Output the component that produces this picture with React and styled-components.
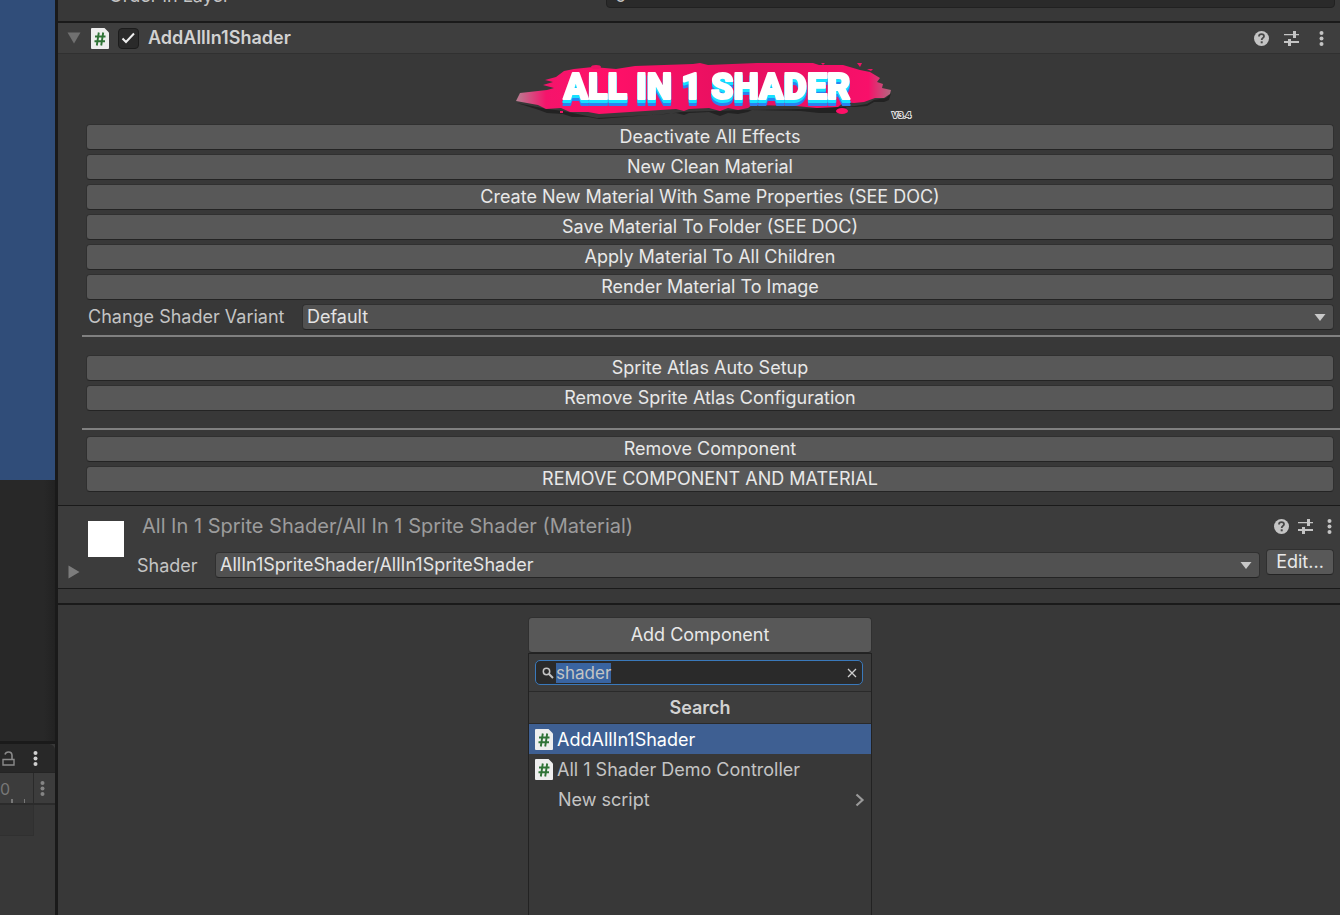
import React, { useEffect, useRef, useState } from "react";
import styled, { createGlobalStyle } from "styled-components";

const materialActions = [
  "Deactivate All Effects",
  "New Clean Material",
  "Create New Material With Same Properties (SEE DOC)",
  "Save Material To Folder (SEE DOC)",
  "Apply Material To All Children",
  "Render Material To Image",
];
const atlasActions = ["Sprite Atlas Auto Setup", "Remove Sprite Atlas Configuration"];
const removeActions = ["Remove Component", "REMOVE COMPONENT AND MATERIAL"];

export default function App() {
  return (
    <>
      <GlobalStyle />
      <Editor>
        <SidePanel />
        <Inspector>
          <PreviousRow>
            <PreviousLabel htmlFor="order">Order in Layer</PreviousLabel>
            <NumberField id="order" defaultValue="0" />
          </PreviousRow>
          <ShaderComponent />
          <MaterialSection />
          <AddComponent />
        </Inspector>
      </Editor>
    </>
  );
}

function SidePanel() {
  return (
    <Side>
      <Hierarchy>
        <Selection />
      </Hierarchy>
      <Timeline>
        <TimelineTabs>
          <IconButton aria-label="Lock">
            <LockIcon />
          </IconButton>
          <IconButton aria-label="Timeline menu">
            <DotsIcon color="#d0d0d0" />
          </IconButton>
        </TimelineTabs>
        <TimelineBar>
          <Ruler>
            <span>00</span>
            <svg width="34" height="4" viewBox="0 0 34 4">
              <path d="M11 0h2v4h-2zM24 0h1v4h-1z" fill="#777" />
            </svg>
          </Ruler>
          <IconButton aria-label="Track menu">
            <DotsIcon color="#858585" />
          </IconButton>
        </TimelineBar>
        <Track />
      </Timeline>
    </Side>
  );
}

function ShaderComponent() {
  const [enabled, setEnabled] = useState(true);
  return (
    <section>
      <ComponentHeader>
        <Foldout aria-label="Collapse">
          <svg width="14" height="12" viewBox="0 0 14 12">
            <path d="M0.500 0.500h13L7 11.500z" fill="#707070" />
          </svg>
        </Foldout>
        <ScriptIcon />
        <CheckWrap>
          <Checkbox
            id="enabled"
            type="checkbox"
            checked={enabled}
            onChange={(e) => setEnabled(e.target.checked)}
          />
          {enabled && (
            <svg width="21" height="21" viewBox="0 0 21 21" fill="none">
              <path d="M4.500 10.500l3.500 3.500 8-8.500" stroke="#eee" strokeWidth="2" />
            </svg>
          )}
        </CheckWrap>
        <ComponentTitle htmlFor="enabled">AddAllIn1Shader</ComponentTitle>
        <HeaderIcons $gap={15}>
          <HeaderButtons />
        </HeaderIcons>
      </ComponentHeader>
      <Banner>
        <ShaderLogo />
      </Banner>
      <ActionList>
        {materialActions.map((label) => (
          <Button key={label}>{label}</Button>
        ))}
        <VariantRow>
          <Label htmlFor="variant">Change Shader Variant</Label>
          <Dropdown id="variant" value="Default" />
        </VariantRow>
      </ActionList>
      <Rule $space={18} />
      <ActionList>
        {atlasActions.map((label) => (
          <Button key={label}>{label}</Button>
        ))}
      </ActionList>
      <Spacer />
      <Rule $space={6} />
      <ActionList>
        {removeActions.map((label) => (
          <Button key={label}>{label}</Button>
        ))}
      </ActionList>
    </section>
  );
}

function MaterialSection() {
  return (
    <Material>
      <Foldout aria-label="Expand material">
        <svg width="12" height="14" viewBox="0 0 12 14">
          <path d="M0.500 0.500v13L11.500 7z" fill="#7c7c7c" />
        </svg>
      </Foldout>
      <Preview />
      <MaterialBody>
        <MaterialTop>
          <MaterialTitle>All In 1 Sprite Shader/All In 1 Sprite Shader (Material)</MaterialTitle>
          <HeaderIcons $gap={9}>
            <HeaderButtons />
          </HeaderIcons>
        </MaterialTop>
        <ShaderRow>
          <Label htmlFor="shader">Shader</Label>
          <Dropdown id="shader" value="AllIn1SpriteShader/AllIn1SpriteShader" />
          <EditButton>Edit...</EditButton>
        </ShaderRow>
      </MaterialBody>
    </Material>
  );
}

function AddComponent() {
  const input = useRef(null);
  const [query, setQuery] = useState("shader");

  useEffect(() => {
    input.current.focus();
    input.current.select();
  }, []);

  return (
    <AddArea>
      <AddButton>Add Component</AddButton>
      <Popup>
        <SearchArea>
          <SearchBox>
            <svg width="12" height="12" viewBox="0 0 12 12" fill="none" stroke="#c4c4c4">
              <circle cx="4.500" cy="4.500" r="3.200" strokeWidth="1.500" />
              <path d="M7 7l4 4" strokeWidth="2" />
            </svg>
            <SearchInput
              ref={input}
              aria-label="Search components"
              value={query}
              onChange={(e) => setQuery(e.target.value)}
            />
            <IconButton aria-label="Clear" onClick={() => setQuery("")}>
              <svg width="10" height="10" viewBox="0 0 10 10" stroke="#d0d0d0">
                <path d="M1 1l8 8M9 1l-8 8" strokeWidth="1.300" />
              </svg>
            </IconButton>
          </SearchBox>
        </SearchArea>
        <PopupTitle>Search</PopupTitle>
        <Result $active>
          <ScriptIcon />
          AddAllIn1Shader
        </Result>
        <Result>
          <ScriptIcon />
          All 1 Shader Demo Controller
        </Result>
        <Result $plain>
          New script
          <svg width="10" height="14" viewBox="0 0 10 14" fill="none">
            <path d="M1.500 1.500L7.500 7l-6 5.500" stroke="#9a9a9a" strokeWidth="2.200" />
          </svg>
        </Result>
      </Popup>
    </AddArea>
  );
}

function Dropdown({ id, value }) {
  return (
    <SelectWrap>
      <Select id={id} defaultValue={value}>
        <option>{value}</option>
      </Select>
      <svg width="12" height="7" viewBox="0 0 12 7">
        <path d="M0.500 0h11L6 7z" fill="#c8c8c8" />
      </svg>
    </SelectWrap>
  );
}

function HeaderButtons() {
  return (
    <>
      <IconButton aria-label="Help">
        <svg width="15" height="15" viewBox="0 0 15 15" fill="none">
          <circle cx="7.500" cy="7.500" r="7.500" fill="#c4c4c4" />
          <path
            d="M5 5.500C5 3.900 6 3.200 7.500 3.200S10 4 10 5.300c0 1.600-2.300 1.700-2.300 3.700"
            stroke="#484848"
            strokeWidth="1.800"
          />
          <path d="M6.700 10.300h2v2h-2z" fill="#484848" />
        </svg>
      </IconButton>
      <IconButton aria-label="Presets">
        <svg width="15" height="15" viewBox="0 0 15 15" fill="#c4c4c4">
          <path d="M0 3h9v1.200H0zM9 0h3v7H9zM12 3h3v1.200h-3zM0 10h4v2H0zM4 8h3v7H4zM7 10h8v2H7z" />
        </svg>
      </IconButton>
      <IconButton aria-label="More">
        <DotsIcon color="#c4c4c4" />
      </IconButton>
    </>
  );
}

function DotsIcon({ color }) {
  return (
    <svg width="5" height="15" viewBox="0 0 5 15" fill={color}>
      <circle cx="2.500" cy="2" r="2" />
      <circle cx="2.500" cy="7.500" r="2" />
      <circle cx="2.500" cy="13" r="2" />
    </svg>
  );
}

function LockIcon() {
  return (
    <svg width="13" height="15" viewBox="0 0 13 15" fill="none" stroke="#8a8a8a">
      <path d="M1 8.500h11v5.500H1z" strokeWidth="1.400" />
      <path d="M3 3.500C3.500 1.700 4.700 1 6.500 1 8.800 1 10 2.300 10 4.500V8" strokeWidth="1.600" />
    </svg>
  );
}

function ScriptIcon() {
  return (
    <svg width="18" height="21" viewBox="0 0 18 21" fill="none">
      <path d="M1 0h12.500L18 4.500V20a1 1 0 0 1-1 1H1a1 1 0 0 1-1-1V1a1 1 0 0 1 1-1z" fill="#eee" />
      <path d="M7.800 4.500L5.800 17.500M12.200 4.500l-2 13M4 8.500h10.500M3.500 13.200H14" stroke="#2f7336" strokeWidth="1.900" />
    </svg>
  );
}

function ShaderLogo() {
  return (
    <svg width="410" height="66" viewBox="0 0 410 66" role="img" aria-label="All In 1 Shader v3.4">
      <defs>
        <linearGradient id="splash">
          <stop offset="0" stopColor="#b98093" />
          <stop offset="0.080" stopColor="#f5146b" />
          <stop offset="0.250" stopColor="#ff1068" />
          <stop offset="0.600" stopColor="#e5105f" />
          <stop offset="0.940" stopColor="#f8106a" />
          <stop offset="1" stopColor="#b06a80" />
        </linearGradient>
      </defs>
      <path
        d="M4 38L34 44 50 46 84 53 154 49 168 47 230 45 288 44 342 41 354 39 361 35 373 33 378 28 376 35 371 37 361 37 354 41 342 42 334 42 330 45 324 48 306 48 288 46 239 45 235 47 225 49 215 48 207 51 196 47 176 48 171 50 163 48 86 54 75 52 59 52 50 49 34 48 26 45z"
        fill="#222"
        transform="translate(1 3)"
      />
      <path
        d="M3 37L7 29 34 26 41 24 30 21 40 18 32 16 43 13 51 7 61 5 80 3 103 5 122 2 180 0 187-1 195 1 244-1 300-1 306 1 330 1 347 6 357 8 367 14 364 18 370 20 369 24 378 26 377 30 371 34 362 34 351 38 341 39 331 38 325 43 304 44 283 42 239 41 235 44 225 46 215 44 207 47 196 44 176 45 171 47 163 45 86 50 75 48 57 48 48 44 33 45 25 41z"
        fill="url(#splash)"
        transform="translate(1 2)"
      />
      <ellipse cx="84" cy="5" rx="5" ry="2" fill="#ed1264" />
      <ellipse cx="330" cy="49" rx="6" ry="3" fill="#ff1068" />
      <path d="M309 1h4l-2 2zM345 1h5l-2 4zM355 7h6l-2 2zM48 49h3v2h-3z" fill="#ef1465" />
      <LogoText x="195" y="37">
        ALL IN 1 SHADER
      </LogoText>
      <VersionText x="380" y="56">
        V3.4
      </VersionText>
    </svg>
  );
}

const GlobalStyle = createGlobalStyle`
  * {
    box-sizing: border-box;
  }
  body {
    margin: 0;
    background: #383838;
    color: #c4c4c4;
    font-family: Inter, "Liberation Sans", sans-serif;
    font-size: 18px;
    line-height: 24px;
  }
  button, input, select {
    font: inherit;
    color: inherit;
  }
  svg {
    display: block;
    flex-shrink: 0;
  }
`;

const Editor = styled.div`
  display: flex;
  height: 100vh;
  overflow: hidden;
`;

const Side = styled.aside`
  display: flex;
  flex-direction: column;
  width: 58px;
  flex-shrink: 0;
  border-right: 3px solid #1a1a1a;
`;
const Hierarchy = styled.div`
  flex: 1;
  background: linear-gradient(to right, #282828 80%, #222);
`;
const Selection = styled.div`
  height: 480px;
  background: #304d79;
`;
const Timeline = styled.div`
  height: 174px;
  border-top: 3px solid #1a1a1a;
  background: #383838;
`;
const TimelineTabs = styled.div`
  display: flex;
  align-items: center;
  gap: 18px;
  height: 28px;
  padding-left: 2px;
  background: #282828;
  border-top-right-radius: 6px;
`;
const TimelineBar = styled.div`
  display: flex;
  align-items: center;
  gap: 6px;
  height: 33px;
  background: #3c3c3c;
  border-top: 1px solid #242424;
  border-bottom: 2px solid #2b2b2b;
`;
const Ruler = styled.div`
  display: flex;
  flex-direction: column;
  align-items: flex-start;
  justify-content: flex-end;
  width: 34px;
  height: 100%;
  border-right: 1px solid #2a2a2a;
  color: #777;
  font-size: 16px;
  line-height: 20px;
  overflow: hidden;
  span {
    margin-left: -10px;
  }
`;
const Track = styled.div`
  width: 34px;
  height: 31px;
  background: #343434;
  border-right: 1px solid #303030;
  border-bottom: 1px solid #303030;
`;

const Inspector = styled.main`
  display: flex;
  flex-direction: column;
  flex: 1;
  min-width: 0;
`;
const PreviousRow = styled.div`
  display: flex;
  height: 23px;
  flex-shrink: 0;
  padding: 0 5px 0 51px;
  border-bottom: 2px solid #1a1a1a;
  overflow: hidden;
`;
const PreviousLabel = styled.label`
  width: 497px;
  margin-top: -16px;
`;
const NumberField = styled.input`
  flex: 1;
  height: 26px;
  margin-top: -18px;
  padding: 0 8px;
  background: #2a2a2a;
  border: 1px solid #212121;
  border-radius: 4px;
`;

const ComponentHeader = styled.header`
  display: flex;
  align-items: center;
  height: 31px;
  padding: 0 11px 0 9px;
  background: #3e3e3e;
  border-bottom: 1px solid #303030;
`;
const IconButton = styled.button`
  display: flex;
  padding: 0;
  border: 0;
  background: none;
`;
const Foldout = styled(IconButton)`
  justify-content: center;
  width: 14px;
  margin-right: 10px;
`;
const CheckWrap = styled.span`
  position: relative;
  margin: 0 9px;
  svg {
    position: absolute;
    inset: 0;
    pointer-events: none;
  }
`;
const Checkbox = styled.input`
  appearance: none;
  display: block;
  width: 21px;
  height: 21px;
  margin: 0;
  background: #2a2a2a;
  border: 1px solid #1c1c1c;
  border-radius: 4px;
`;
const ComponentTitle = styled.label`
  font-weight: 600;
  color: #d2d2d2;
`;
const HeaderIcons = styled.div`
  display: flex;
  align-items: center;
  gap: ${(props) => props.$gap}px;
  margin-left: auto;
  ${IconButton} {
    justify-content: center;
    width: 15px;
  }
`;

const Banner = styled.div`
  display: flex;
  justify-content: center;
  height: 70px;
  padding: 8px 0 0 36px;
`;
const LogoText = styled.text`
  font-family: Roboto, sans-serif;
  font-size: 36px;
  font-weight: 900;
  text-anchor: middle;
  fill: #fff;
  stroke: #fff;
  stroke-width: 2px;
  stroke-linejoin: round;
  filter: drop-shadow(0 3px 0 #16e0ff) drop-shadow(0 3px 0 #2a82f2);
`;
const VersionText = styled.text`
  font-size: 8px;
  font-weight: 700;
  fill: #333;
  stroke: #ddd;
  stroke-width: 2px;
  paint-order: stroke;
`;

const ActionList = styled.div`
  display: flex;
  flex-direction: column;
  gap: 4px;
  padding: 0 6px 0 28px;
`;
const Button = styled.button`
  height: 26px;
  padding: 0;
  background: #585858;
  border: 1px solid #303030;
  border-bottom-color: #242424;
  border-radius: 4px;
  color: #e8e8e8;
`;
const Label = styled.label`
  white-space: nowrap;
`;
const VariantRow = styled.div`
  display: flex;
  align-items: center;
  padding-left: 2px;
  ${Label} {
    width: 214px;
  }
`;
const SelectWrap = styled.div`
  position: relative;
  flex: 1;
  svg {
    position: absolute;
    top: 10px;
    right: 8px;
    pointer-events: none;
  }
`;
const Select = styled.select`
  appearance: none;
  display: block;
  width: 100%;
  height: 26px;
  padding: 0 4px;
  background: #515151;
  border: 1px solid #303030;
  border-bottom-color: #242424;
  border-radius: 4px;
  color: #e4e4e4;
`;
const Rule = styled.hr`
  height: 2px;
  margin: 5px 0 ${(props) => props.$space}px 24px;
  border: 0;
  background: #808080;
`;
const Spacer = styled.div`
  height: 12px;
`;

const Material = styled.section`
  display: flex;
  align-items: flex-end;
  height: 84px;
  flex-shrink: 0;
  margin-top: 13px;
  padding: 0 6px 9px 9px;
  background: #3c3c3c;
  border-top: 1px solid #1a1a1a;
  border-bottom: 1px solid #1a1a1a;
`;
const Preview = styled.div`
  align-self: flex-start;
  width: 36px;
  height: 36px;
  margin: 15px 13px 0 -3px;
  background: #fff;
`;
const MaterialBody = styled.div`
  align-self: flex-start;
  flex: 1;
  padding-top: 8px;
`;
const MaterialTop = styled.div`
  display: flex;
  align-items: center;
  height: 24px;
  margin-bottom: 11px;
  padding-left: 5px;
  ${HeaderIcons} {
    margin-right: -3px;
  }
`;
const MaterialTitle = styled.h2`
  margin: 0;
  color: #9c9c9c;
  font-size: 20px;
  font-weight: 400;
`;
const ShaderRow = styled.div`
  display: flex;
  align-items: flex-end;
  ${Label} {
    width: 78px;
  }
`;
const EditButton = styled(Button)`
  width: 68px;
  margin: 0 0 3px 6px;
`;

const AddArea = styled.section`
  display: flex;
  flex-direction: column;
  align-items: center;
  flex: 1;
  min-height: 0;
  margin-top: 14px;
  padding: 12px 0 0 2px;
  border-top: 2px solid #1a1a1a;
`;
const AddButton = styled(Button)`
  width: 344px;
  height: 36px;
  flex-shrink: 0;
`;
const Popup = styled.div`
  flex: 1;
  width: 344px;
  border: 1px solid #222;
  border-bottom: 0;
`;
const SearchArea = styled.div`
  padding: 6px 8px 6px 6px;
  background: #3c3c3c;
`;
const SearchBox = styled.div`
  display: flex;
  align-items: center;
  height: 25px;
  padding: 0 5px 0 6px;
  background: #2a2a2a;
  border: 1px solid #3a79bb;
  border-radius: 5px;
`;
const SearchInput = styled.input`
  flex: 1;
  min-width: 0;
  padding: 0;
  margin-left: 2px;
  border: 0;
  outline: 0;
  background: none;
  line-height: 20px;
  font-size: 17px;
  &::selection {
    background: rgba(58, 101, 163, 0.99);
    color: #c4c4c4;
  }
`;
const PopupTitle = styled.h3`
  margin: 0;
  padding: 4px 0 3px;
  background: #3e3e3e;
  border-top: 1px solid #2a2a2a;
  border-bottom: 1px solid #2a2a2a;
  color: #d2d2d2;
  font-size: 18px;
  font-weight: 600;
  text-align: center;
`;
const Result = styled.button`
  display: flex;
  align-items: center;
  gap: 4px;
  width: 100%;
  height: 30px;
  padding: 1px 6px 0 ${(props) => (props.$plain ? 29 : 6)}px;
  justify-content: ${(props) => (props.$plain ? "space-between" : "flex-start")};
  border: 0;
  background: ${(props) => (props.$active ? "#3e5f92" : "transparent")};
  color: ${(props) => (props.$active ? "#fff" : "#c4c4c4")};
`;
